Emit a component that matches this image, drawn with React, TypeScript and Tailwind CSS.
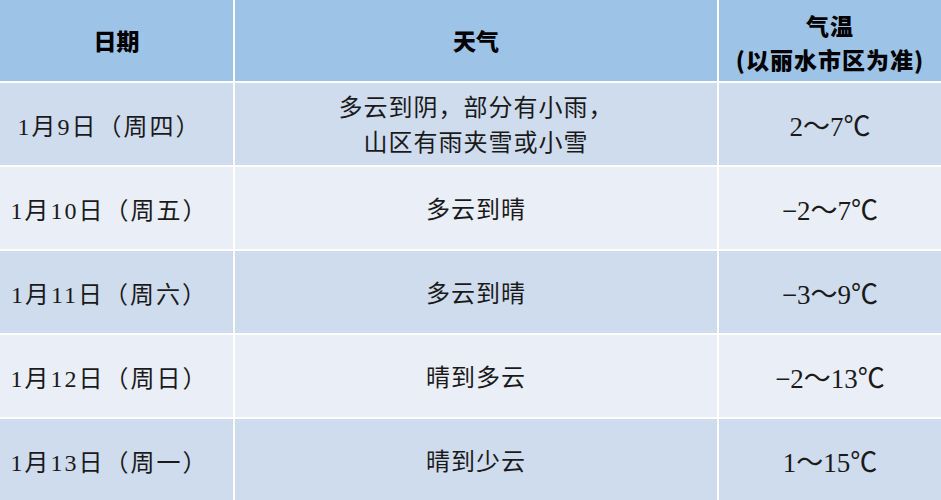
const rows = [
  { date: '1月9日（周四）', weather: ['多云到阴，部分有小雨，', '山区有雨夹雪或小雪'], temp: '2～7℃' },
  { date: '1月10日（周五）', weather: ['多云到晴'], temp: '−2～7℃' },
  { date: '1月11日（周六）', weather: ['多云到晴'], temp: '−3～9℃' },
  { date: '1月12日（周日）', weather: ['晴到多云'], temp: '−2～13℃' },
  { date: '1月13日（周一）', weather: ['晴到少云'], temp: '1～15℃' },
];

const serif = 'font-["Liberation_Serif","Noto_Sans_CJK_SC",serif]';

export default function App() {
  return (
    <div className="h-[500px] w-[941px] overflow-hidden bg-white">
      <div className="grid grid-cols-[233px_482px_1fr] gap-[2px] bg-white">
        {/* header */}
        <div className="flex h-[81px] items-center justify-center bg-[#9dc3e6] text-[23px] font-black text-black font-['Noto_Sans_CJK_SC',sans-serif]">
          日期
        </div>
        <div className="flex h-[81px] items-center justify-center bg-[#9dc3e6] text-[23px] font-black text-black font-['Noto_Sans_CJK_SC',sans-serif]">
          天气
        </div>
        <div className="flex h-[81px] flex-col items-center justify-center pt-[3px] bg-[#9dc3e6] text-[23px] font-black leading-[34px] tracking-[1px] text-black font-['Noto_Sans_CJK_SC',sans-serif]">
          <span>气温</span>
          <span>(以丽水市区为准)</span>
        </div>

        {rows.map((r, i) => {
          const bg = i % 2 === 0 ? 'bg-[#cfdcee]' : 'bg-[#e9eef7]';
          return (
            <div key={r.date} className="contents">
              <div className={`flex h-[82px] items-center justify-center pt-[6px] pr-[14px] text-[24px] tracking-[2px] text-[#1a1a1a] ${bg} ${serif}`}>
                {r.date}
              </div>
              <div className={`flex h-[82px] flex-col items-center justify-center pt-[4px] text-[24px] tracking-[1px] leading-[35px] text-[#1a1a1a] ${bg} ${serif}`}>
                {r.weather.map((w) => (
                  <span key={w}>{w}</span>
                ))}
              </div>
              <div className={`flex h-[82px] items-center justify-center pt-[6px] text-[27px] text-[#1a1a1a] ${bg} ${serif}`}>
                {r.temp}
              </div>
            </div>
          );
        })}
      </div>
    </div>
  );
}
